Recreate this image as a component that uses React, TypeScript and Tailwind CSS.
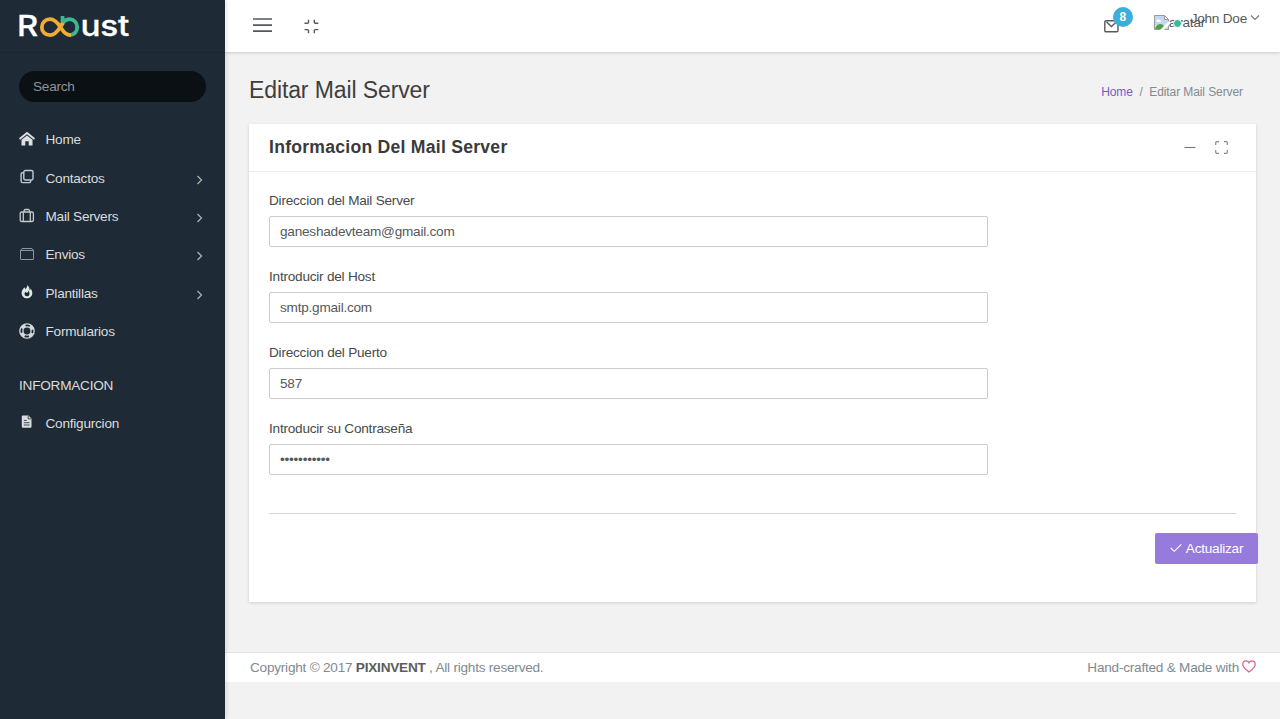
import React from "react";

const HomeIcon = () => (
  <svg width="16" height="16" viewBox="0 0 16 16" fill="#dce0e3">
    <path d="M8 .8 16 7.2l-1.1 1.5L8 3.3 1.100 8.700 0 7.200z" />
    <path d="M8 4.500 13.500 8.800V14.500H9.700V10.300H6.300V14.500H2.500V8.800z" />
  </svg>
);

const CopyIcon = () => (
  <svg width="16" height="16" viewBox="0 0 16 16" fill="none" stroke="#c3c9cd" strokeWidth="1.400">
    <rect x="4.800" y="1.500" width="9.200" height="9.500" rx="1.400" />
    <path d="M4.500 3.800H3.600a1.500 1.500 0 0 0-1.500 1.500v6.600a1.700 1.700 0 0 0 1.700 1.700h6.400a1.500 1.500 0 0 0 1.500-1.500v-.8" />
  </svg>
);

const CaseIcon = () => (
  <svg width="16" height="16" viewBox="0 0 16 16" fill="none" stroke="#c3c9cd" strokeWidth="1.300">
    <rect x="1.200" y="4" width="13.200" height="9.500" rx="1.600" />
    <path d="M4.300 4v9.500M11.300 4v9.500M5.100 4V2.800A1.300 1.300 0 0 1 6.400 1.500h2.800a1.300 1.300 0 0 1 1.300 1.300V4" />
  </svg>
);

const BoxIcon = () => (
  <svg width="16" height="16" viewBox="0 0 16 16" fill="none" stroke="#8d969d" strokeWidth="1">
    <path d="M1.500 4.500h13v8.500a.5.5 0 0 1-.5.5H2a.5.5 0 0 1-.5-.5zM1.500 4.500 3 2.500h10l1.500 2" />
  </svg>
);

const FlameIcon = () => (
  <svg width="16" height="16" viewBox="0 0 16 16">
    <path fill="#e3e6e8" d="M8.300 1c.2 2-1 3.100-2 4.200-.4-.5-.6-1.200-.5-2C3.700 4.700 2.600 6.800 2.600 9c0 3.100 2.300 5.300 5.300 5.300s5.400-2.200 5.400-5.300c0-1.900-.8-3.400-1.700-4.500 0 1-.3 1.700-.9 2.100C10.700 4.500 10 2.300 8.300 1z" />
    <path fill="#1e2b36" d="M9.300 6.500c.1 1.300-.5 2-1.400 2.400-.5-.2-.8-.6-1-1.100C5.800 8.500 5.400 9.400 5.500 10.300c.2 1.200 1.200 2 2.500 2s2.500-.9 2.500-2.300c0-1.500-.5-2.600-1.200-3.500z" />
  </svg>
);

const BuoyIcon = () => (
  <svg width="16" height="16" viewBox="0 0 16 16" fill="none">
    <circle cx="8" cy="8" r="7.200" stroke="#d3d8db" strokeWidth="1.300" />
    <circle cx="8" cy="8" r="4.100" stroke="#d3d8db" strokeWidth="1.300" />
    <circle cx="8" cy="8" r="5.600" stroke="#d3d8db" strokeWidth="3" strokeDasharray="4.400 4.396" strokeDashoffset="-2.200" />
  </svg>
);

const FileIcon = () => (
  <svg width="16" height="16" viewBox="0 0 16 16">
    <path fill="#d9dde0" d="M3.800 1.500h5.700L12.500 4.500v8.200a1 1 0 0 1-1 1H3.800a1 1 0 0 1-1-1v-10.200a1 1 0 0 1 1-1z" />
    <path stroke="#1e2b36" strokeWidth=".8" fill="none" d="M9.200 1.900v3h3M4.900 6.400h2.800M4.900 8.700h5.600M4.900 11h5.600" />
  </svg>
);

const links = [
  { label: "Home", icon: <HomeIcon />, more: false },
  { label: "Contactos", icon: <CopyIcon />, more: true },
  { label: "Mail Servers", icon: <CaseIcon />, more: true },
  { label: "Envios", icon: <BoxIcon />, more: true },
  { label: "Plantillas", icon: <FlameIcon />, more: true },
  { label: "Formularios", icon: <BuoyIcon />, more: false },
];

const fields = [
  { label: "Direccion del Mail Server", value: "ganeshadevteam@gmail.com", type: "text" },
  { label: "Introducir del Host", value: "smtp.gmail.com", type: "text" },
  { label: "Direccion del Puerto", value: "587", type: "text" },
  { label: "Introducir su Contraseña", value: "contraseña1", type: "password" },
];

function NavItem({ label, icon, more }: { label: string; icon: React.ReactNode; more: boolean }) {
  return (
    <a className="flex h-[38.4px] items-center pr-[19px] pl-[18.500px] text-[#dcdcdc]">
      <span className="-mt-[2px] mr-[11px]">{icon}</span>
      <span className="flex-1">{label}</span>
      {more && (
        <svg className="mt-[3px]" width="12" height="12" viewBox="0 0 12 12" fill="none" stroke="#a9b0b5" strokeWidth="1.300">
          <path d="M3.500 2 7.500 6l-4 4" />
        </svg>
      )}
    </a>
  );
}

function Logo() {
  return (
    <svg width="116" height="36" viewBox="0 0 116 36">
      <g fill="#fff" stroke="#fff" strokeWidth=".3" fontFamily="Inter, sans-serif" fontSize="29" fontWeight="500">
        <text x="-1" y="28" textLength="21" lengthAdjust="spacingAndGlyphs">R</text>
        <text x="62.500" y="28" textLength="48.500" lengthAdjust="spacingAndGlyphs">ust</text>
      </g>
      <g fill="none" strokeWidth="3.800">
        <path stroke="#3fb590" d="M44.500 8V16M44 15.500C46.500 12.500 49 11.200 51.500 11.200c4.500 0 7.700 3.500 7.700 8s-3.200 8-7.700 8" />
        <path stroke="#f0ad32" d="M53 27.100c-4.500.4-7.500-3.100-10-7.100-3-4.900-6-8.800-11-8.800-4.700 0-8.200 3.500-8.200 8s3.500 8 8.200 8c4.500 0 7.500-3.600 10-7.600L45 15" />
      </g>
    </svg>
  );
}

export default function App() {
  return (
    <div className="flex h-[719px] w-[1280px] overflow-hidden bg-[#f2f2f2] font-['Liberation_Sans',sans-serif] text-[13.600px] leading-[21px] tracking-[-0.230px] text-[#55595c]">
      <aside className="z-10 w-[225px] shrink-0 bg-[#1e2b36] shadow-[1px_0_5px_rgba(0,0,0,0.12)]">
        <div className="h-[53px] border-b border-[#1a2731] pt-2 pl-[18px]">
          <Logo />
        </div>
        <div className="px-[19px] pt-[18px]">
          <div className="flex h-[31px] items-center rounded-full bg-[#0b1015] px-[14px] text-[#8f9294]">Search</div>
        </div>
        <nav className="pt-[18.600px]">
          {links.map((l) => (
            <NavItem key={l.label} {...l} />
          ))}
          <div className="flex h-[49px] items-end pb-1 pl-[19px] text-[#dcdcdc]">INFORMACION</div>
          <div className="pt-[4px]">
            <NavItem label="Configurcion" icon={<FileIcon />} more={false} />
          </div>
        </nav>
      </aside>

      <div className="flex w-[1055px] flex-col">
        <header className="flex h-[52px] shrink-0 items-start justify-between bg-white shadow-[0_1px_3px_rgba(0,0,0,0.16)]">
          <div className="flex pt-[17px] pl-7">
            <svg width="19" height="16" viewBox="0 0 19 16" stroke="#55595c" strokeWidth="1.700">
              <path d="M0 2h19M0 8.200h19M0 14.200h19" />
            </svg>
            <svg className="mt-[2px] ml-[32px]" width="15" height="15" viewBox="0 0 15 15" fill="none" stroke="#55595c" strokeWidth="1.400">
              <path d="M.5 4.300h3a1 1 0 0 0 1-1v-2.500M10.300.8v2.500a1 1 0 0 0 1 1h3M.5 10.600h3a1 1 0 0 1 1 1v2.600M10.300 14.200v-2.600a1 1 0 0 1 1-1h3" />
            </svg>
          </div>
          <div className="flex pr-5">
            <div className="relative mt-[20px] mr-[35px]">
              <svg width="15" height="13" viewBox="0 0 15 13" fill="none" stroke="#55595c" strokeWidth="1.400">
                <rect x=".8" y=".8" width="13.200" height="11" rx="1.200" />
                <path d="M2.500 2 7.400 6.500l4.900-4.500" />
              </svg>
              <span className="absolute -top-[13px] left-[9px] flex size-[20px] items-center justify-center rounded-full bg-[#3bafda] text-[12px] font-bold text-white">8</span>
            </div>
            <div className="relative mt-[12px] flex h-5 w-[37px]">
              <svg className="mt-[3px] shrink-0" width="15" height="15" viewBox="0 0 15 15">
                <path d="M.5.500h10l4 4V14.500H.5z" fill="#c6d7f3" stroke="#9b9b9b" />
                <path d="M10.500.500v4h4z" fill="#fff" stroke="#9b9b9b" />
                <path d="M2.500 6.500c0-2 2-3 3-1.500 1.500 0 2 1.500 1 2H2.500z" fill="#fff" />
                <path d="M1 14c1-3.500 3-5 5.500-5 2 0 3.500 1.500 5 5z" fill="#4ea340" />
                <path d="M6 15 15 6v4l-5 5z" fill="#fff" />
              </svg>
              <span>avatar</span>
              <span className="absolute top-[7px] left-[19px] size-[9px] rounded-full border border-white bg-[#37bc9b]" />
            </div>
            <span className="mt-[8px]">John Doe</span>
            <svg className="mt-[13px] ml-[3px]" width="10" height="9" viewBox="0 0 10 9" fill="none" stroke="#777" strokeWidth="1.100">
              <path d="M1 2.500 5 6.500l4-4" />
            </svg>
          </div>
        </header>

        <main className="h-[600px] shrink-0 px-6 pt-[20px]">
          <div className="flex h-[52px] items-start justify-between pr-[13px]">
            <h1 className="pt-[3px] text-[23px] leading-[30px] tracking-[-0.110px] text-[#3e3e3e]">Editar Mail Server</h1>
            <div className="flex gap-[6.600px] pt-[10px] text-[12px] tracking-[-0.090px] text-[#818a91]">
              <a className="text-[#7a57d1]">Home</a>
              <span>/</span>
              <span>Editar Mail Server</span>
            </div>
          </div>
          <section className="h-[478px] bg-white shadow-[0_1px_3px_rgba(0,0,0,0.15)]">
            <div className="flex h-12 items-center justify-between border-b border-[#eee] pr-7 pl-5">
              <h2 className="text-[17.600px] font-bold tracking-[0.250px] text-[#3a3a3a]">Informacion Del Mail Server</h2>
              <div className="flex items-center gap-[18px]">
                <svg className="mr-px" width="12" height="12" viewBox="0 0 12 12" stroke="#777" strokeWidth="1.100">
                  <path d="M.5 5.500h11" />
                </svg>
                <svg width="13" height="13" viewBox="0 0 13 13" fill="none" stroke="#888" strokeWidth="1.200">
                  <path d="M.7 4V1.700a1 1 0 0 1 1-1H4M9 .7h2.300a1 1 0 0 1 1 1V4M.7 9v2.300a1 1 0 0 0 1 1H4M9 12.300h2.300a1 1 0 0 0 1-1V9" />
                </svg>
              </div>
            </div>
            <form className="px-5 pt-[18px]">
              {fields.map((f) => (
                <label key={f.label} className="block h-[76px] text-[#464a4c]">
                  <span className="block h-[26px]">{f.label}</span>
                  <input
                    className="block h-[31px] w-[719px] rounded-[2px] border border-[#ccc] bg-white px-[10px] pb-px tracking-[-0.230px] text-[#55595c]"
                    type={f.type}
                    defaultValue={f.value}
                  />
                </label>
              ))}
              <hr className="mt-[19px] border-[#d5d5d5]" />
              <div className="-mr-[22px] flex justify-end pt-[19px]">
                <button type="button" className="flex h-[31px] w-[103px] items-center justify-center gap-1 rounded-[2px] bg-[#967adc] pb-px tracking-[-0.230px] text-white">
                  <svg width="12" height="12" viewBox="0 0 12 12" fill="none" stroke="#fff" strokeWidth="1.100">
                    <path d="M.8 6 4.300 9.300 11.300 2.300" />
                  </svg>
                  Actualizar
                </button>
              </div>
            </form>
          </section>
        </main>

        <footer className="flex h-[30px] shrink-0 items-center justify-between border-t border-[#e4e4e4] bg-white pr-6 pl-[25px] text-[#818a91]">
          <span>
            Copyright © 2017 <b className="text-[#5c5c5c]">PIXINVENT</b> , All rights reserved.
          </span>
          <span className="flex items-center gap-[3px]">
            Hand-crafted &amp; Made with
            <svg className="-mt-[3px]" width="14" height="13" viewBox="0 0 14 13" fill="none" stroke="#d8608c" strokeWidth="1.200">
              <path d="M7 12C4.500 10 .8 7.500.8 4.300.8 2.200 2.200.9 3.900.9 5.300.9 6.400 1.600 7 2.800 7.600 1.600 8.700.9 10.100.9c1.700 0 3.100 1.300 3.100 3.400C13.200 7.500 9.500 10 7 12z" />
            </svg>
          </span>
        </footer>
      </div>
    </div>
  );
}
